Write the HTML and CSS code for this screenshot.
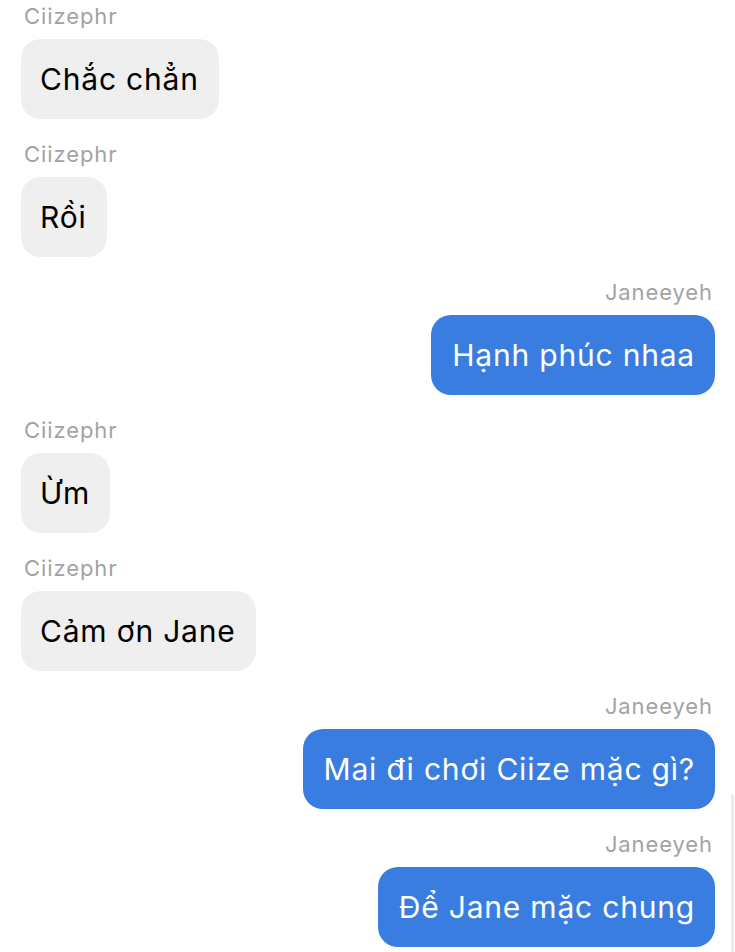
FILE: index.html
```html
<!DOCTYPE html>
<html lang="vi">
<head>
  <meta charset="UTF-8" />
  <title>Tin nhắn</title>
  <link rel="stylesheet" href="styles.css">
</head>
<body>

<main class="chat">
  <div class="msg them">
    <div class="name">Ciizephr</div>
    <div class="bubble">Chắc chẳn</div>
  </div>
  <div class="msg them">
    <div class="name">Ciizephr</div>
    <div class="bubble">Rồi</div>
  </div>
  <div class="msg me">
    <div class="name">Janeeyeh</div>
    <div class="bubble">Hạnh phúc nhaa</div>
  </div>
  <div class="msg them">
    <div class="name">Ciizephr</div>
    <div class="bubble">Ừm</div>
  </div>
  <div class="msg them">
    <div class="name">Ciizephr</div>
    <div class="bubble">Cảm ơn Jane</div>
  </div>
  <div class="msg me">
    <div class="name">Janeeyeh</div>
    <div class="bubble">Mai đi chơi Ciize mặc gì?</div>
  </div>
  <div class="msg me">
    <div class="name">Janeeyeh</div>
    <div class="bubble">Để Jane mặc chung</div>
  </div>
</main>

<div class="scroll-thumb"></div>

</body>
</html>
```

FILE: styles.css
```css
body {
  margin: 0;
  background: #fff;
  font-family: Inter, "Liberation Sans", sans-serif;
  overflow: hidden;
}
.chat {
  display: flex;
  flex-direction: column;
  gap: 22px;
  padding: 3px 20px 0 21px;
}
.msg {
  display: flex;
  flex-direction: column;
  align-items: flex-start;
}
.msg.me {
  align-items: flex-end;
}
.name {
  font-size: 22px;
  line-height: 26px;
  letter-spacing: 0.9px;
  color: #a3a3a3;
  margin: 0 3px 10px;
}
.msg.me .name {
  margin-right: 2px;
}
.bubble {
  box-sizing: border-box;
  height: 80px;
  padding: 0 20px 0 19px;
  display: flex;
  align-items: center;
  font-size: 30px;
  letter-spacing: 0.8px;
  border-radius: 20px;
  background: #efefef;
  color: #000;
}
.msg.me .bubble {
  background: #387ddf;
  color: #fff;
  padding: 0 20px 0 21px;
}
.scroll-thumb {
  position: fixed;
  right: 1px;
  top: 795px;
  bottom: 0;
  width: 3px;
  background: #ececec;
}
```
